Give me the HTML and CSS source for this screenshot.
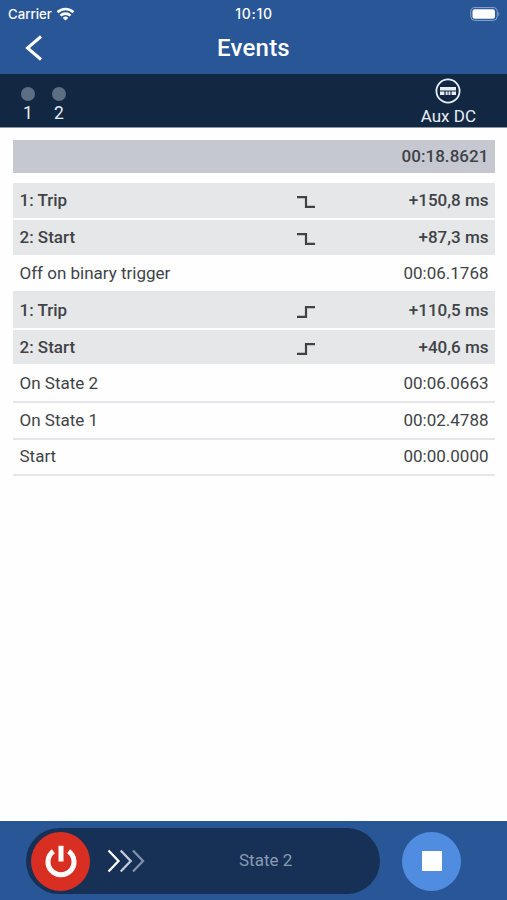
FILE: index.html
```html
<!DOCTYPE html>
<html lang="en">
<head>
<meta charset="utf-8">
<meta name="viewport" content="width=device-width, initial-scale=1">
<title>Events</title>
<link rel="stylesheet" href="styles.css">
</head>
<body>
<header class="top">
  <div class="status">
    <div class="carrier"><span>Carrier</span>
      <svg class="wifi" width="19" height="14" viewBox="0 0 18 14" fill="none" stroke="#fff" stroke-width="2.6"><path d="M1 5.2a11.5 11.5 0 0 1 16 0M4 8.6a7.2 7.2 0 0 1 10 0"/><path d="M9 13.6 6.3 10.9a3.9 3.9 0 0 1 5.4 0z" fill="#fff" stroke="none"/></svg>
    </div>
    <time class="clock">10:10</time>
    <svg class="battery" width="30" height="14" viewBox="0 0 30 14"><rect x=".8" y=".6" width="26.4" height="12.8" rx="4" fill="none" stroke="#8da6cf"/><rect x="2.5" y="2.3" width="22.5" height="9.4" rx="2.2" fill="#fff"/><path d="M28.4 4.8q2 2.2 0 4.4z" fill="#8da6cf"/></svg>
  </div>
  <nav class="title-bar">
    <svg class="back" width="18" height="26" viewBox="0 0 18 26" fill="none" stroke="#fff" stroke-width="3"><path d="M16 1.5 2.5 13 16 24.5"/></svg>
    <h1>Events</h1>
  </nav>
</header>
<section class="signals">
  <div class="inputs">
    <div class="input"><i class="dot"></i><span>1</span></div>
    <div class="input"><i class="dot"></i><span>2</span></div>
  </div>
  <div class="aux">
    <svg width="26" height="26" viewBox="0 0 26 26"><circle cx="13" cy="13" r="11.6" fill="none" stroke="#e6edf5" stroke-width="1.8"/><path d="M5 9h16v3.6H5zM5 13.6h4.4v3.4H5zM10.7 13.6h1.9v3.4h-1.9zM13.5 13.6h1.9v3.4h-1.9zM16.6 13.6H21v3.4h-4.4z" fill="#e6edf5"/></svg>
    <span>Aux DC</span>
  </div>
</section>
<main>
  <div class="total">00:18.8621</div>
  <ul class="events">
    <li class="edge"><span>1: Trip</span><svg class="step" viewBox="0 0 18 12"><path d="M0 1.2h9v9.6h9"/></svg><span>+150,8 ms</span></li>
    <li class="edge"><span>2: Start</span><svg class="step" viewBox="0 0 18 12"><path d="M0 1.2h9v9.6h9"/></svg><span>+87,3 ms</span></li>
    <li><span>Off on binary trigger</span><span>00:06.1768</span></li>
    <li class="edge"><span>1: Trip</span><svg class="step" viewBox="0 0 18 12"><path d="M0 10.8h9V1.2h9"/></svg><span>+110,5 ms</span></li>
    <li class="edge"><span>2: Start</span><svg class="step" viewBox="0 0 18 12"><path d="M0 10.8h9V1.2h9"/></svg><span>+40,6 ms</span></li>
    <li><span>On State 2</span><span>00:06.0663</span></li>
    <li><span>On State 1</span><span>00:02.4788</span></li>
    <li><span>Start</span><span>00:00.0000</span></li>
  </ul>
</main>
<footer>
  <div class="slider">
    <button class="power" aria-label="Power"><svg width="34" height="34" viewBox="0 0 34 34" fill="none" stroke="#fff" stroke-width="5"><path d="M9.4 7.3a13 13 0 1 0 15.2 0M17 1.8v15.8"/></svg></button>
    <svg class="chevrons" width="38" height="24" viewBox="0 0 38 24" fill="none" stroke-width="2.3"><path d="M1.5 1.5 11.5 12 1.5 22.5" stroke="#fff"/><path d="M13.7 1.5 23.7 12 13.7 22.5" stroke="#c3ccda"/><path d="M26 1.5 36 12 26 22.5" stroke="#8290a8"/></svg>
    <span class="state">State 2</span>
  </div>
  <button class="stop" aria-label="Stop"><i></i></button>
</footer>
</body>
</html>
```
FILE: styles.css
```css
* { box-sizing: border-box; }
body { margin: 0; height: 900px; display: flex; flex-direction: column; overflow: hidden; background: #fefefe; color: #3f4347; font: 17px/20px Roboto, sans-serif; }
.top { height: 74px; background: #295697; color: #fff; }
.status { display: grid; grid-template-columns: 1fr auto 1fr; height: 27px; align-items: center; padding: 0 7px 0 8px; font: 500 13.2px/20px Inter, sans-serif; }
.carrier { display: flex; align-items: center; gap: 4px; }
.clock { font-weight: 500; font-size: 14px; letter-spacing: .7px; }
.battery { justify-self: end; }
.title-bar { display: grid; grid-template-columns: 1fr auto 1fr; align-items: center; height: 41px; padding: 0 25px; }
h1 { margin: 0; font-size: 24px; line-height: 30px; font-weight: 500; letter-spacing: .2px; }
.signals { height: 54px; background: #122742; color: #e6edf5; display: flex; justify-content: space-between; padding: 4px 31px 0 21px; border-bottom: 1px solid #8b95a3; }
.inputs { display: flex; gap: 17px; padding-top: 9px; }
.input { display: flex; flex-direction: column; align-items: center; width: 14px; font-size: 17.5px; line-height: 24px; }
.dot { flex: none; width: 14px; height: 14px; border-radius: 50%; background: #5d6d83; }
.aux { display: flex; flex-direction: column; align-items: center; line-height: 24px; }
.aux svg { flex: none; }
main { flex: 1; padding: 12px 12.5px 0 13px; }
.total { height: 33px; background: #c5c7d1; font-weight: 500; line-height: 33px; text-align: right; padding-right: 6px; letter-spacing: .05px; }
.events { list-style: none; margin: 9.5px 0 0; padding: 0; }
.events li { height: 36.6px; display: grid; grid-template-columns: 1fr 18px 174px; align-items: center; padding: 0 6px 1px 6.5px; border-bottom: 2px solid #e4e6e9; }
.events li:first-child { height: 37.5px; }
.events li > :first-child { grid-column: 1; white-space: nowrap; }
.events li > :last-child { grid-column: 3; text-align: right; }
.events .edge { background: #e6e7e9; border-color: #fefefe; font-weight: 500; }
.step { width: 18px; height: 12px; margin-top: 5px; fill: none; stroke: #3f4347; stroke-width: 2.2; }
footer { height: 79px; background: #295697; display: flex; align-items: center; padding: 1px 46px 0 26px; justify-content: space-between; }
button { border: 0; padding: 0; display: grid; place-items: center; width: 59px; height: 59px; border-radius: 50%; }
.slider { width: 354px; height: 66px; border-radius: 33px; background: #163056; display: flex; align-items: center; padding-left: 5px; }
.power { background: #d92f23; }
.chevrons { margin-left: 17px; }
.state { margin: 0 0 2px 94px; color: #8a9ab3; }
.stop { background: #508de1; }
.stop i { width: 20px; height: 20px; background: #fff; }
```
